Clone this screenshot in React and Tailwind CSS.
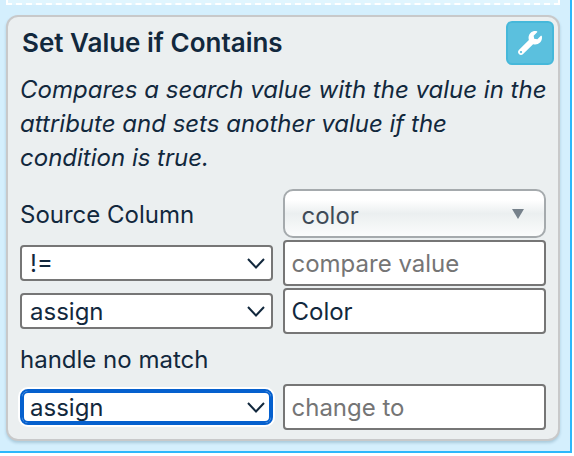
import { useState } from 'react'
import { FaWrench } from 'react-icons/fa'

const OPERATORS = ['!=', '==', 'contains']
const ACTIONS = ['assign', 'replace', 'append']
const COLUMNS = ['color', 'size', 'material']

export default function App() {
  const [rule, setRule] = useState({
    column: 'color',
    operator: '!=',
    compare: '',
    matchAction: 'assign',
    matchValue: 'Color',
    elseAction: 'assign',
    elseValue: '',
  })

  function update(key, value) {
    setRule({ ...rule, [key]: value })
  }

  return (
    <div className="bg-white pr-0.5 font-['Inter',sans-serif] text-[#12283d]">
      <main className="border-r-2 border-b-2 border-[#2db7fb] bg-[#d4effd] pr-2.5 pb-2.5 pl-1.5">
        {/* bottom edge of the drop area above the card */}
        <div className="h-[5px] border-x-2 border-b-2 border-dashed border-white bg-[#e0f5fe]" />

        <section className="mt-2.5 rounded-xl border-2 border-[#c8c9ca] bg-[#ebeff0] pt-1 pb-[9px] shadow-[0_2px_3px_rgba(0,60,90,0.2)]">
          <header className="flex items-center justify-between pr-1 pl-3.5">
            <h1 className="text-[26px] leading-8 font-semibold">Set Value if Contains</h1>
            <button
              type="button"
              aria-label="Settings"
              className="flex h-11 w-12 items-center justify-center rounded-md border-2 border-[#46b8da] bg-[#5bc0de] text-white"
            >
              <FaWrench size={24} />
            </button>
          </header>

          <p className="mt-2 pr-1 pl-3 text-2xl leading-[34px] italic">
            Compares a search value with the value in the attribute and sets another value if the condition is true.
          </p>

          <div className="mt-3.5 grid grid-cols-[253fr_262fr] items-center gap-x-2.5 gap-y-0.5 px-3 text-2xl">
            <label htmlFor="column" className="pt-0.5">Source Column</label>
            <div className="relative">
              <select
                id="column"
                value={rule.column}
                onChange={(e) => update('column', e.target.value)}
                className="block h-[49px] w-full appearance-none rounded-[10px] border-2 border-[#a5aaad] bg-linear-to-b from-white from-20% via-[#ebeff0] via-50% to-[#fbfcfc] px-4 pt-1 text-[#3e4a57] outline-none"
              >
                {COLUMNS.map((name) => <option key={name}>{name}</option>)}
              </select>
              <svg viewBox="0 0 12 10" className="pointer-events-none absolute top-5 right-[22px] h-2.5 w-3" fill="#76818b">
                <path d="M0 0h12L6 10z" />
              </svg>
            </div>

            <PlainSelect label="Operator" options={OPERATORS} value={rule.operator} onChange={(v) => update('operator', v)} />
            <TextField label="Compare value" placeholder="compare value" value={rule.compare} onChange={(v) => update('compare', v)} />

            <PlainSelect label="Action on match" options={ACTIONS} value={rule.matchAction} onChange={(v) => update('matchAction', v)} />
            <TextField label="Value on match" value={rule.matchValue} onChange={(v) => update('matchValue', v)} />

            <label htmlFor="no-match" className="col-span-2 pt-0.5 leading-[44px]">handle no match</label>

            <PlainSelect id="no-match" active options={ACTIONS} value={rule.elseAction} onChange={(v) => update('elseAction', v)} />
            <TextField label="Value on no match" placeholder="change to" value={rule.elseValue} onChange={(v) => update('elseValue', v)} />
          </div>
        </section>
      </main>
    </div>
  )
}

// select with a chevron; active draws the thick blue ring
function PlainSelect({ id, label, options, value, onChange, active }) {
  const frame = active
    ? 'rounded-lg border-[#0560ce] inset-ring-2 inset-ring-[#0560ce] ring-2 ring-white'
    : 'rounded border-[#767676]'

  return (
    <div className="relative">
      <select
        id={id}
        aria-label={label}
        value={value}
        onChange={(e) => onChange(e.target.value)}
        className={`block h-9 w-full appearance-none border-2 bg-white px-2 pt-0.5 leading-7 outline-none ${frame}`}
      >
        {options.map((name) => <option key={name}>{name}</option>)}
      </select>
      <svg viewBox="0 0 18 11" className="pointer-events-none absolute top-[13px] right-2 h-[11px] w-[18px]" fill="none" stroke="#12283d" strokeWidth="2">
        <path d="M1 1l8 8.5L17 1" />
      </svg>
    </div>
  )
}

function TextField({ label, placeholder, value, onChange }) {
  return (
    <input
      type="text"
      aria-label={label}
      placeholder={placeholder}
      value={value}
      onChange={(e) => onChange(e.target.value)}
      className="h-[46px] w-full min-w-0 rounded border-2 border-[#767676] bg-white px-1.5 outline-none placeholder:text-[#757575]"
    />
  )
}
